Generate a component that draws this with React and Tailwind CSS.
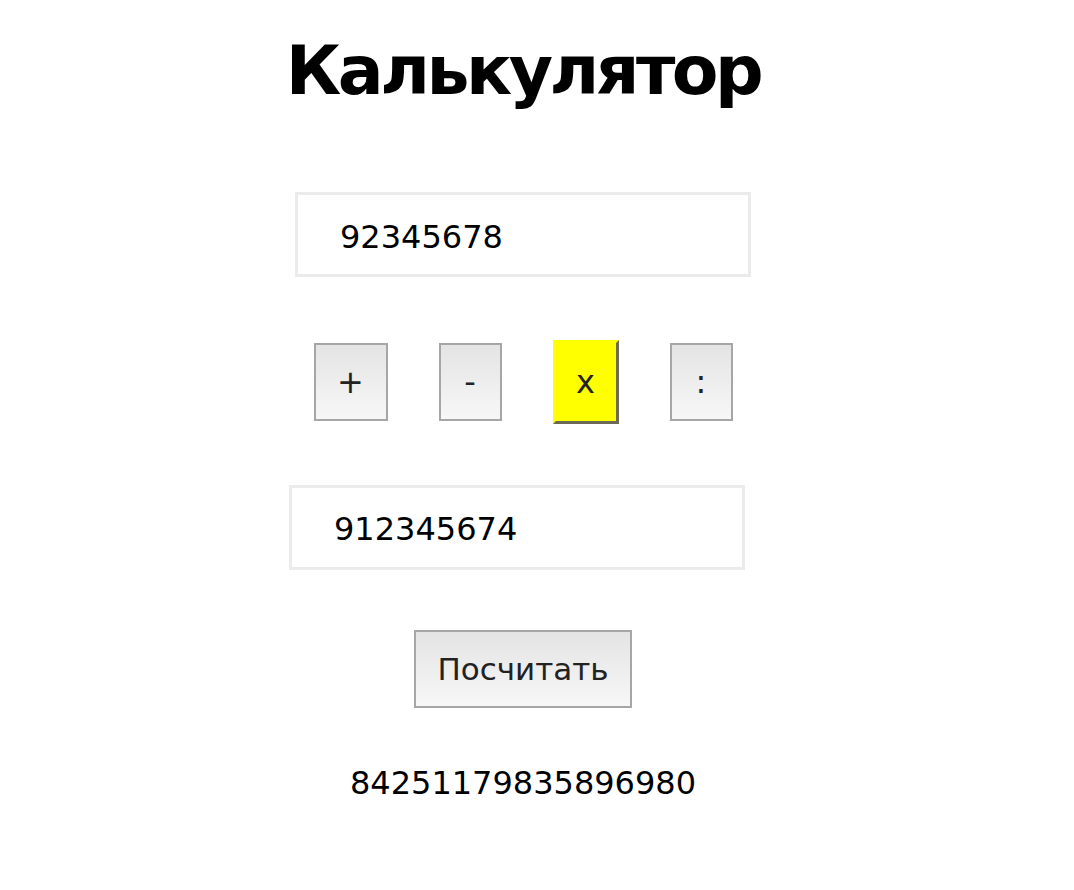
export default function App() {
  const font = { fontFamily: '"DejaVu Sans", Verdana, sans-serif' };
  return (
    <div className="w-[1046px] bg-white flex flex-col items-center pt-[37px]" style={font}>
      <h1 className="text-[68px] font-bold leading-none text-black h-[80px] tracking-[-3.5px]">Калькулятор</h1>
      <div className="mt-[75px] w-[456px] h-[85px] border-[3px] border-[#ebebeb] flex items-center pl-[42px] pt-[4px] text-[32px] text-black">
        92345678
      </div>
      <div className="mt-[62px] flex items-center gap-[51px] h-[86px]">
        <button className="w-[74px] h-[78px] border-2 border-[#a6a6a6] bg-gradient-to-b from-[#e4e4e4] to-[#f7f7f7] text-[32px] text-[#222]">+</button>
        <button className="w-[63px] h-[78px] border-2 border-[#a6a6a6] bg-gradient-to-b from-[#e4e4e4] to-[#f7f7f7] text-[32px] text-[#222]">-</button>
        <button className="w-[66px] h-[84px] border-[3px] border-t-[#ffff00] border-l-[#ffff00] border-r-[#6b6b55] border-b-[#6b6b55] bg-[#ffff00] text-[32px] text-[#222]">x</button>
        <button className="w-[63px] h-[78px] border-2 border-[#a6a6a6] bg-gradient-to-b from-[#e4e4e4] to-[#f7f7f7] text-[32px] text-[#222]">:</button>
      </div>
      <div className="mt-[60px] -ml-[12px] w-[456px] h-[85px] border-[3px] border-[#ebebeb] flex items-center pl-[42px] pt-[2px] text-[32px] text-black">
        912345674
      </div>
      <button className="mt-[60px] w-[218px] h-[78px] border-2 border-[#a6a6a6] bg-gradient-to-b from-[#e4e4e4] to-[#f7f7f7] text-[31px] text-[#222]">Посчитать</button>
      <div className="mt-[59px] text-[32px] text-black leading-none">84251179835896980</div>
      <div className="h-[80px]"></div>
    </div>
  );
}
